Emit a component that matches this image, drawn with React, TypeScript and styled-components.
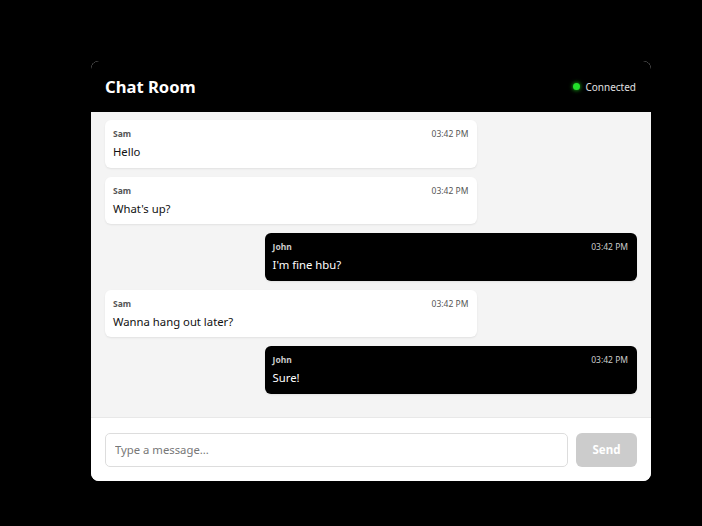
import React from "react";
import styled, { createGlobalStyle } from "styled-components";

const GlobalStyle = createGlobalStyle`
  html, body {
    margin: 0;
    padding: 0;
    background: #000;
    font-family: "Noto Sans", "Open Sans", sans-serif;
  }
`;

const Page = styled.div`
  width: 702px;
  height: 526px;
  box-sizing: border-box;
  padding: 61px 0 0 91px;
  background: #000;
`;

const Card = styled.div`
  width: 560px;
  height: 420px;
  display: flex;
  flex-direction: column;
  background: #fff;
  border-radius: 8px;
  overflow: hidden;
`;

const Header = styled.div`
  height: 51px;
  flex-shrink: 0;
  display: flex;
  align-items: center;
  justify-content: space-between;
  padding: 0 15px 0 14px;
  background: #000;
  color: #fff;
`;

const Title = styled.h1`
  margin: 0;
  font-size: 16.6px;
  font-weight: 700;
`;

const Status = styled.div`
  display: flex;
  align-items: center;
  gap: 5px;
  font-size: 10px;
  color: #e0e0e0;
`;

const Dot = styled.span`
  width: 7px;
  height: 7px;
  border-radius: 50%;
  background: #22e02a;
  box-shadow: 0 0 4px #1fd81f;
`;

const Messages = styled.div`
  flex: 1;
  display: flex;
  flex-direction: column;
  gap: 8.75px;
  padding: 8px 14px;
  background: #f4f4f4;
  overflow: hidden;
`;

const Bubble = styled.div<{ $own?: boolean }>`
  width: 70%;
  box-sizing: border-box;
  align-self: ${(p) => (p.$own ? "flex-end" : "flex-start")};
  padding: 8px 9px 7px 8px;
  border-radius: 6px;
  background: ${(p) => (p.$own ? "#000" : "#fff")};
  color: ${(p) => (p.$own ? "#fff" : "#111")};
  box-shadow: 0 1px 2px rgba(0, 0, 0, 0.08);
`;

const Meta = styled.div<{ $own?: boolean }>`
  display: flex;
  justify-content: space-between;
  align-items: center;
  font-size: 8.5px;
  line-height: 12px;
  color: ${(p) => (p.$own ? "#ccc" : "#555")};
`;

const Sender = styled.span`
  font-weight: 700;
`;

const Text = styled.div`
  margin-top: 3px;
  font-size: 11.3px;
  line-height: 17.75px;
`;

const Footer = styled.div`
  height: 64px;
  flex-shrink: 0;
  box-sizing: border-box;
  display: flex;
  align-items: center;
  gap: 8px;
  padding: 0 14px;
  border-top: 1px solid #e8e8e8;
  background: #fff;
`;

const Input = styled.input`
  flex: 1;
  height: 34px;
  box-sizing: border-box;
  padding: 0 9px;
  border: 1px solid #ddd;
  border-radius: 5px;
  font-family: inherit;
  font-size: 11.3px;
  color: #222;
  outline: none;
  &::placeholder {
    color: #777;
  }
`;

const SendButton = styled.button`
  width: 61px;
  height: 34px;
  border: none;
  border-radius: 6px;
  background: #cccccc;
  color: #fff;
  font-family: inherit;
  font-size: 11.5px;
  font-weight: 700;
`;

const messages = [
  { user: "Sam", text: "Hello" },
  { user: "Sam", text: "What's up?" },
  { user: "John", text: "I'm fine hbu?" },
  { user: "Sam", text: "Wanna hang out later?" },
  { user: "John", text: "Sure!" },
];

export default function App() {
  return (
    <>
      <GlobalStyle />
      <Page>
        <Card>
          <Header>
            <Title>Chat Room</Title>
            <Status>
              <Dot />
              Connected
            </Status>
          </Header>
          <Messages>
            {messages.map((m, i) => {
              const own = m.user === "John";
              return (
                <Bubble key={i} $own={own}>
                  <Meta $own={own}>
                    <Sender>{m.user}</Sender>
                    <span>03:42 PM</span>
                  </Meta>
                  <Text>{m.text}</Text>
                </Bubble>
              );
            })}
          </Messages>
          <Footer>
            <Input placeholder="Type a message..." />
            <SendButton disabled>Send</SendButton>
          </Footer>
        </Card>
      </Page>
    </>
  );
}
